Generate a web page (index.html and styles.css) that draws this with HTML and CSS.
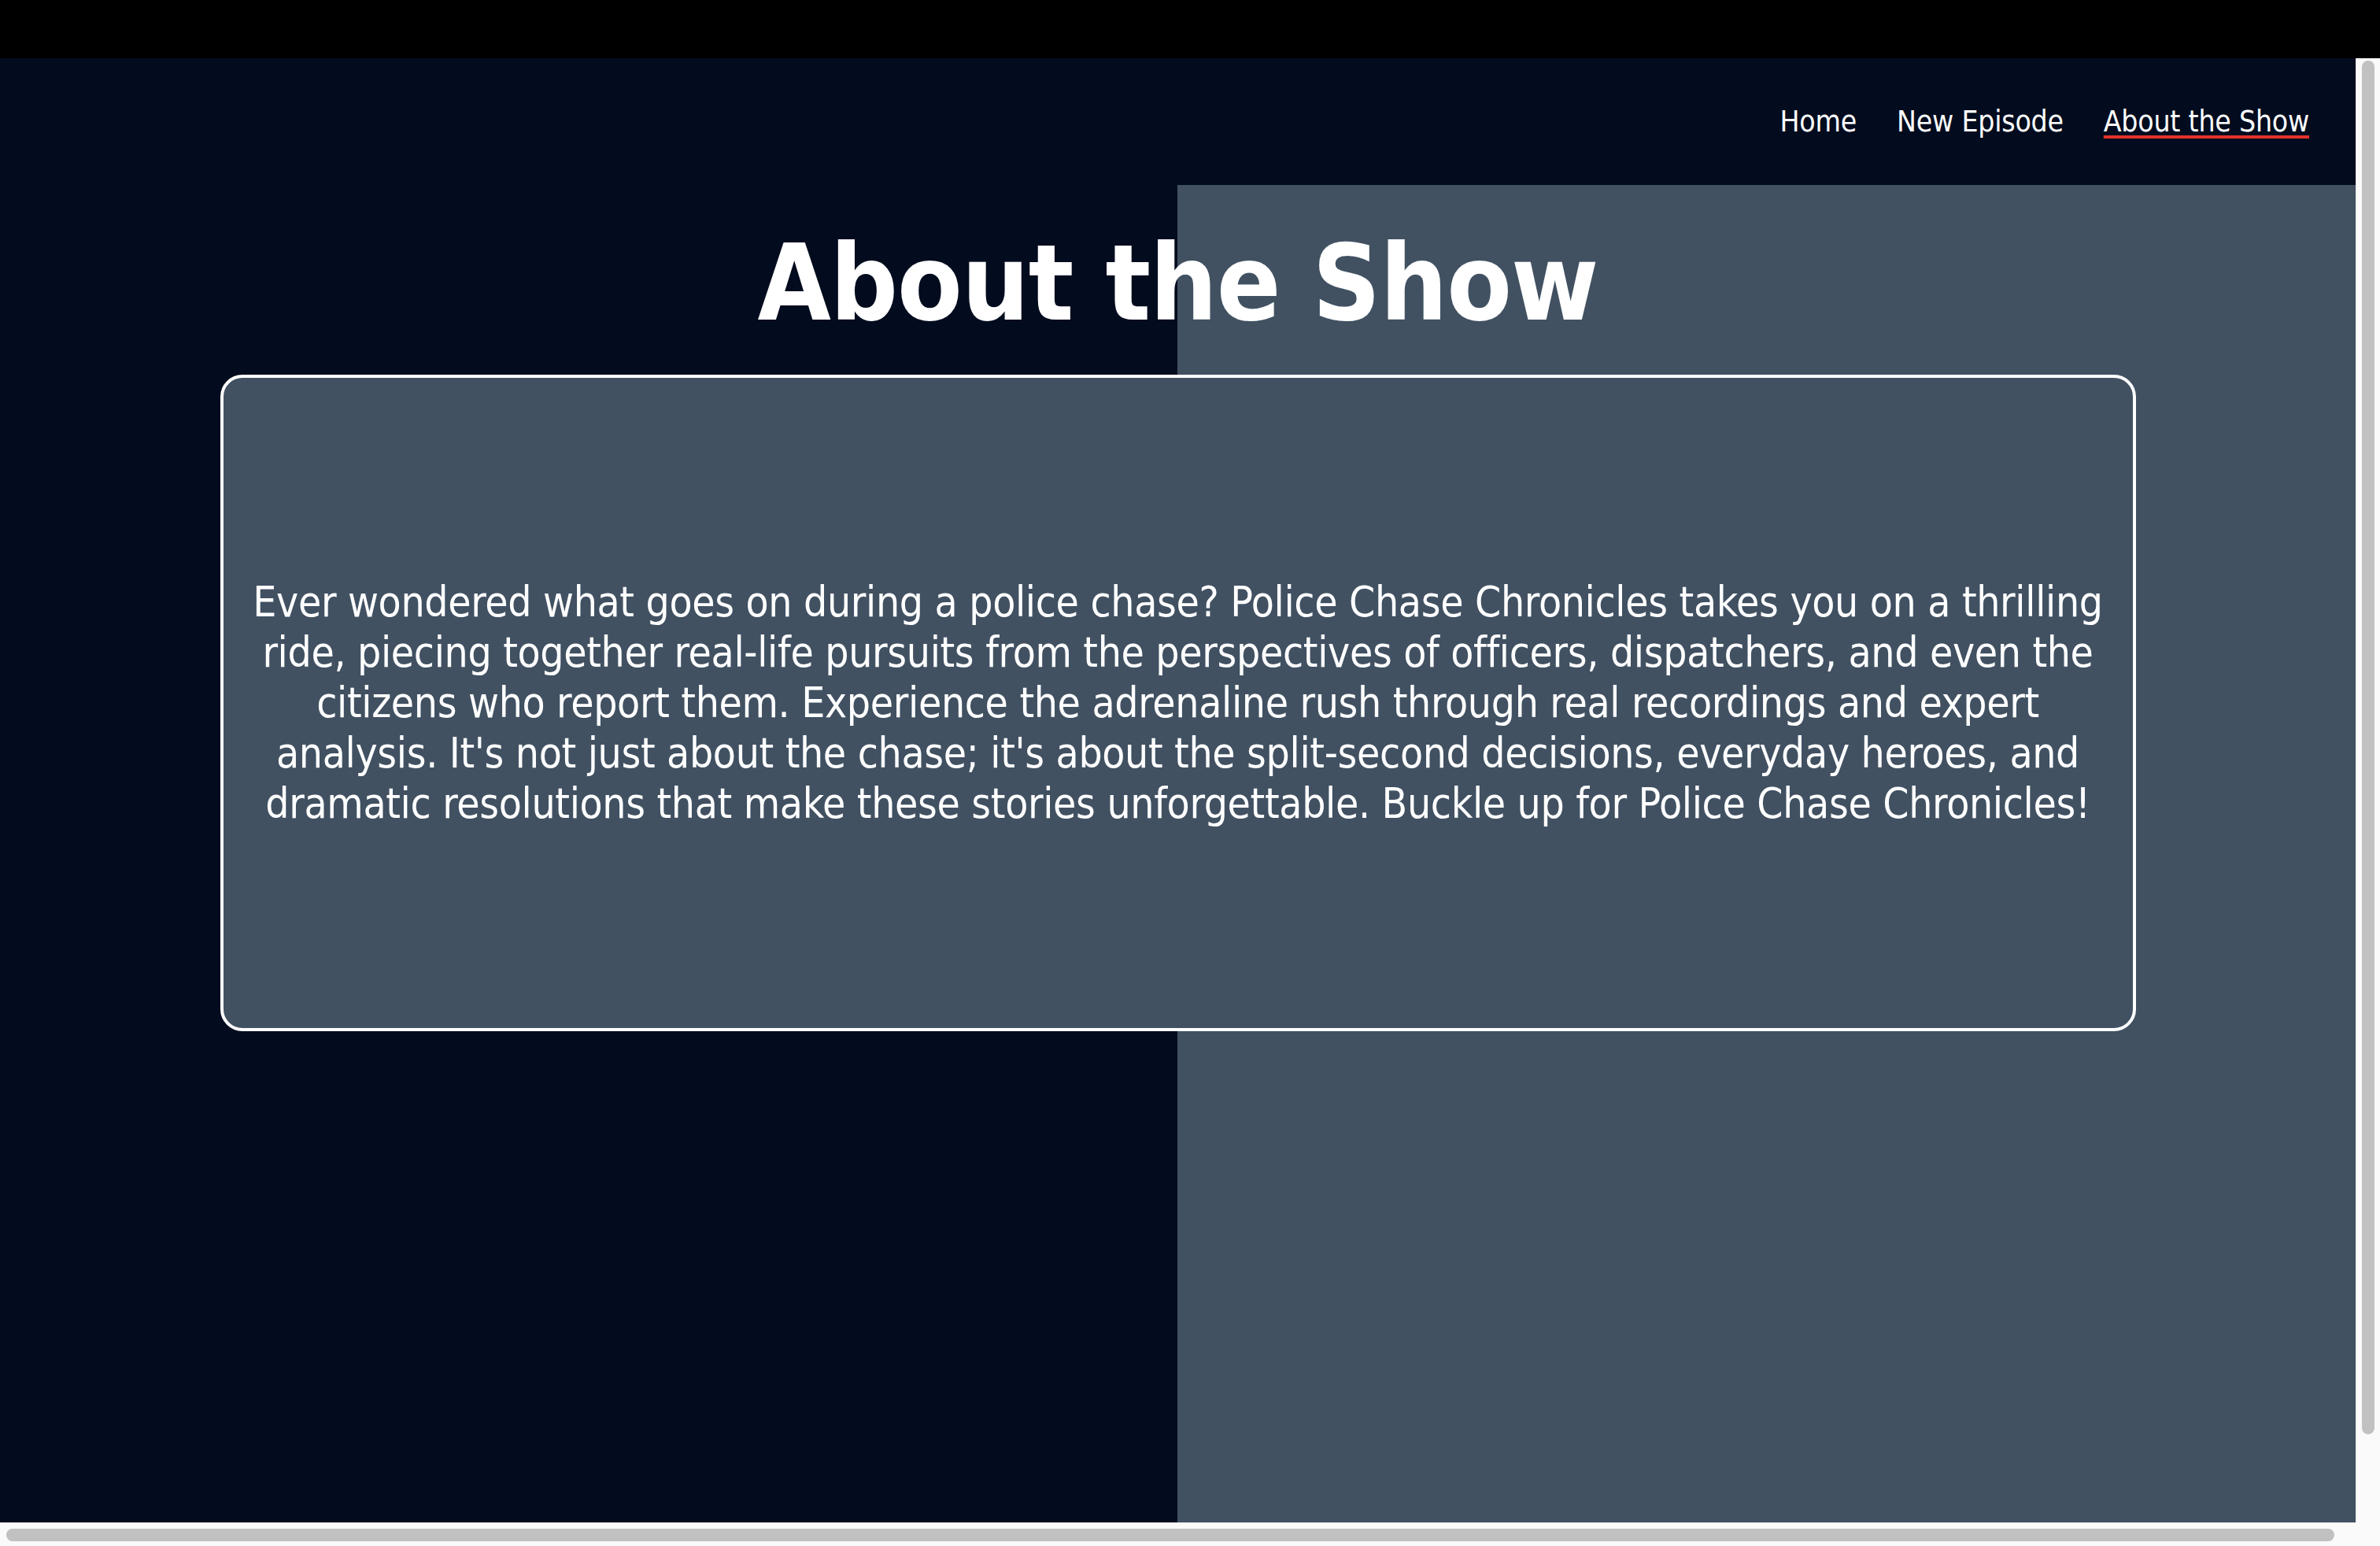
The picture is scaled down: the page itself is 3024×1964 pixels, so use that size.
FILE: index.html
```html
<!DOCTYPE html>
<html lang="en">
<head>
<meta charset="utf-8">
<title>About the Show - Police Chase Chronicles</title>
<link rel="stylesheet" href="styles.css">
</head>
<body>
<div class="topbar"></div>
<div class="window">
  <div class="page">
    <header class="site-header">
      <nav class="nav">
        <a class="nav-link" href="#">Home</a>
        <a class="nav-link" href="#">New Episode</a>
        <a class="nav-link active" href="#">About the Show</a>
      </nav>
    </header>
    <main class="main">
      <h1 class="title">About the Show</h1>
      <section class="about-card">
        <p class="about-text">Ever wondered what goes on during a police chase? Police Chase Chronicles takes you on a thrilling ride, piecing together real-life pursuits from the perspectives of officers, dispatchers, and even the citizens who report them. Experience the adrenaline rush through real recordings and expert analysis. It's not just about the chase; it's about the split-second decisions, everyday heroes, and dramatic resolutions that make these stories unforgettable. Buckle up for Police Chase Chronicles!</p>
      </section>
    </main>
  </div>
  <div class="vscroll"><div class="vthumb"></div></div>
  <div class="hscroll"><div class="hthumb"></div></div>
  <div class="corner"></div>
</div>
</body>
</html>
```
FILE: styles.css
```css
html, body {
  margin: 0;
  padding: 0;
  background: #000;
  overflow: hidden;
}
body {
  font-family: "DejaVu Sans Condensed", "DejaVu Sans", sans-serif;
  font-stretch: condensed;
  color: #fff;
}
.topbar {
  height: 74px;
  background: #000;
}
.window {
  display: grid;
  grid-template-columns: 2993px 31px;
  grid-template-rows: 1860px 30px;
}
.page {
  overflow: hidden;
  display: flex;
  flex-direction: column;
  background: linear-gradient(to right, #030c1f 50%, #415162 50%);
}
.site-header {
  background: #030c1f;
  height: 161px;
  box-sizing: border-box;
  padding: 58px 59px 0 0;
  display: flex;
  justify-content: flex-end;
  align-items: flex-start;
}
.nav {
  display: flex;
  gap: 51px;
  font-size: 37px;
  line-height: 46px;
  letter-spacing: -0.2px;
}
.nav-link {
  color: #fff;
  text-decoration: none;
}
.nav-link.active {
  text-decoration: underline;
  text-decoration-color: #e5322a;
  text-decoration-thickness: 4px;
  text-underline-offset: 5px;
}
.main {
  display: flex;
  flex-direction: column;
  align-items: center;
  padding-top: 44px;
}
.title {
  margin: 0;
  font-size: 134px;
  line-height: 162px;
  font-weight: bold;
  letter-spacing: -1px;
}
.about-card {
  margin-top: 35px;
  width: 2434px;
  height: 834px;
  box-sizing: border-box;
  border: 4px solid #fff;
  border-radius: 28px;
  background: #415162;
  display: flex;
  align-items: center;
  justify-content: center;
  padding: 0 10px;
}
.about-text {
  margin: 0;
  font-size: 53px;
  line-height: 64px;
  letter-spacing: -0.35px;
  text-align: center;
}
.vscroll {
  background: #fafafa;
  border-left: 1px solid #e8e8e8;
  display: flex;
  justify-content: center;
  padding-top: 3px;
}
.vthumb {
  width: 16px;
  height: 1745px;
  border-radius: 8px;
  background: #c1c1c1;
}
.hscroll {
  background: #fafafa;
  border-top: 1px solid #e8e8e8;
  padding: 7px 0 0 8px;
}
.hthumb {
  width: 2958px;
  height: 16px;
  border-radius: 8px;
  background: #c1c1c1;
}
.corner {
  background: #fafafa;
}
```
